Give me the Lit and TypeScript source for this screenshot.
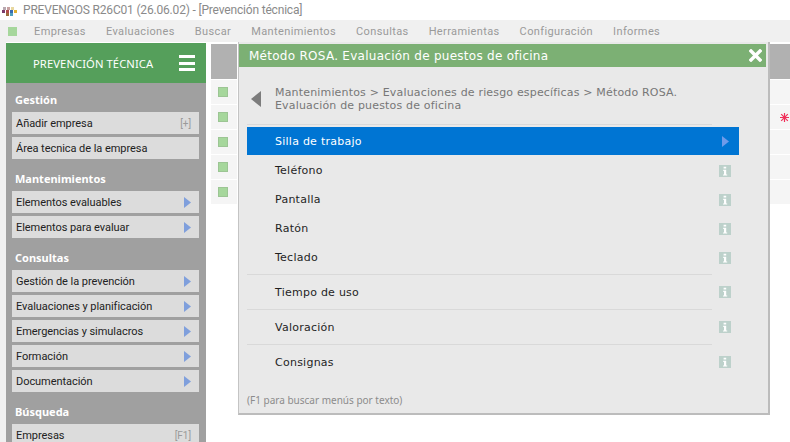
import { LitElement, html, css, svg } from "lit";
import { customElement } from "lit/decorators.js";

const logoCells: [number, number, string][] = [
  [1, 0, "#b8a8b0"], [5, 0, "#c8a0a0"], [9, 0, "#e8d8a0"],
  [0, 3, "#7a3a6a"], [4, 3, "#b04a4a"], [8, 3, "#3a6ab0"], [12, 3, "#e0b030"],
  [4, 6, "#9a6a3a"], [8, 6, "#50a0c0"],
];

const arrow = (fill = "#7f9fdc") => html`<svg class="arrow" width="7" height="11" viewBox="0 0 7 11"><path d="M0 0 L7 5.5 L0 11 Z" fill=${fill}></path></svg>`;
const info = html`<svg class="info" width="12" height="12" viewBox="0 0 12 12"><rect width="12" height="12" fill="#bdd1cb"></rect><path d="M4.6 1.8h2.6v1.8H4.6zM4.2 4.8h3v4.6h1v1.2H4v-1.2h1V6H4.2z" fill="#fff"></path></svg>`;

type Item = { t: string; hint?: string };
const sections: { title: string; items: Item[] }[] = [
  { title: "Gestión", items: [{ t: "Añadir empresa", hint: "[+]" }, { t: "Área tecnica de la empresa", hint: "" }] },
  { title: "Mantenimientos", items: [{ t: "Elementos evaluables" }, { t: "Elementos para evaluar" }] },
  { title: "Consultas", items: [{ t: "Gestión de la prevención" }, { t: "Evaluaciones y planificación" }, { t: "Emergencias y simulacros" }, { t: "Formación" }, { t: "Documentación" }] },
  { title: "Búsqueda", items: [{ t: "Empresas", hint: "[F1]" }] },
];

const menu = ["Empresas", "Evaluaciones", "Buscar", "Mantenimientos", "Consultas", "Herramientas", "Configuración", "Informes"];

@customElement("app-root")
export class AppRoot extends LitElement {
  static styles = css`
    :host { display: block; width: 790px; height: 442px; overflow: hidden; position: relative; background: #fff; font-family: "Noto Sans", sans-serif; }
    .title { height: 20px; display: flex; align-items: center; gap: 5px; padding-left: 2px; background: #fff; color: #8a8a8a; font-family: Roboto, sans-serif; font-size: 12px; letter-spacing: -0.18px; }
    .title svg { margin-top: 3px; }
    .menu { height: 22px; background: #f0f0f0; display: flex; align-items: center; padding-left: 8px; color: #9a9a9a; font-family: Roboto, sans-serif; font-size: 11px; letter-spacing: 0.38px; }
    .menu .sq { width: 9px; height: 9px; background: #a6d79c; margin-right: 17px; }
    .menu span { margin-right: 20px; }
    .body { display: flex; height: 400px; }
    .gutter { width: 6px; background: #f0f0f0; }
    .side { width: 200px; background: #a0a0a0; margin-top: 1px; height: 420px; flex: none; }
    .head { height: 40px; background: #559f5b; color: #fff; display: flex; align-items: center; font-size: 11.2px; letter-spacing: .1px; padding-left: 27px; gap: 26px; }
    .burger { width: 16px; height: 16px; display: flex; flex-direction: column; justify-content: space-between; }
    .burger i { display: block; height: 3px; background: #fff; }
    .sec { padding: 0 7px 0 6px; }
    .sec h3 { margin: 0; height: 29px; padding: 4px 0 0 3px; box-sizing: border-box; display: flex; align-items: center; color: #fff; font-size: 11px; font-weight: 700; }
    .item { height: 22px; margin-bottom: 3px; background: #dcdcdc; display: flex; align-items: center; justify-content: space-between; padding: 0 8px 0 4px; color: #222; font-family: Roboto, sans-serif; font-size: 11px; letter-spacing: -.05px; box-sizing: border-box; }
    .item .hint { color: #9a9a9a; font-size: 10px; }
    .grid { margin: 2px 0 0 5px; width: 579px; }
    .gh { height: 35px; background: #b1b1b1; margin-bottom: 1px; }
    .row { height: 24px; margin-bottom: 1px; background: #f5f5f5; display: flex; align-items: center; padding: 0 1px 0 8px; justify-content: space-between; }
    .row i { width: 8px; height: 8px; background: #a6d79c; outline: 1px solid #9cc594; }
    .modal { position: absolute; left: 238px; top: 42px; width: 532px; height: 373px; box-sizing: border-box; background: #e9e9e9; border-right: 2px solid #bcbcbc; border-bottom: 2px solid #bcbcbc; border-left: 1px solid #c4c4c4; box-shadow: -1px 0 0 #fff; font-family: "DejaVu Sans", sans-serif; display: flex; flex-direction: column; padding: 2px 2px 0 0; }
    .mt { height: 23px; flex: none; background: #7cb074; color: #fff; display: flex; align-items: center; justify-content: space-between; padding: 0 4px 0 10px; font-size: 12px; letter-spacing: .27px; }
    .crumb { display: flex; align-items: center; margin: 18px 0 0 0; padding-left: 12px; height: 28px; color: #777; font-size: 11px; letter-spacing: .17px; line-height: 13px; flex: none; }
    .crumb svg { margin-right: 15px; flex: none; }
    .crumb div { width: 430px; margin-left: -1px; }
    .list { margin: 11px 0 0 8px; width: 492px; padding-top: 3px; background: linear-gradient(#d9d9d9, #d9d9d9) no-repeat 0 0 / 465px 1px; }
    .li { display: flex; align-items: center; justify-content: space-between; height: 29px; color: #1f1f1f; font-size: 11px; letter-spacing: .25px; padding: 0 8px 0 28px; box-sizing: border-box; }
    .li.first { height: 28px; background: #0075d3; color: #fff; padding-right: 10px; margin-bottom: 1px; }
    .li.sep { height: 35px; padding-top: 1px; background: linear-gradient(#d9d9d9, #d9d9d9) no-repeat 0 0 / 465px 1px; }
    .li.gap { margin-top: 2px; }
    .foot { margin: 14px 0 0 8px; color: #8c8c8c; font-family: "Noto Sans", sans-serif; font-size: 10px; }
  `;

  render() {
    return html`
      <div class="title">
        <svg width="16" height="9" viewBox="0 0 16 9">${logoCells.map(([x, y, c]) => svg`<rect x=${x} y=${y} width="3" height="3" fill=${c}></rect>`)}</svg>
        <span>PREVENGOS R26C01 (26.06.02) - [Prevención técnica]</span>
      </div>
      <div class="menu"><div class="sq"></div>${menu.map((m) => html`<span>${m}</span>`)}</div>
      <div class="body">
        <div class="gutter"></div>
        <div class="side">
          <div class="head"><span>PREVENCIÓN TÉCNICA</span><div class="burger"><i></i><i></i><i></i></div></div>
          ${sections.map((s) => html`<div class="sec"><h3>${s.title}</h3>
            ${s.items.map((i) => html`<div class="item"><span>${i.t}</span>${i.hint === undefined ? arrow() : html`<span class="hint">${i.hint}</span>`}</div>`)}
          </div>`)}
        </div>
        <div class="grid">
          <div class="gh"></div>
          ${[0, 1, 2, 3, 4].map((n) => html`<div class="row"><i></i>${n === 1 ? html`<svg width="9" height="9" viewBox="0 0 9 9"><path d="M4.5 0V9M0 4.5H9M1.2 1.2L7.8 7.8M7.8 1.2L1.2 7.8" stroke="#f0305a" stroke-width="1.2" fill="none"></path></svg>` : ""}</div>`)}
        </div>
      </div>
      <div class="modal">
        <div class="mt"><span>Método ROSA. Evaluación de puestos de oficina</span>
          <svg width="13" height="13" viewBox="0 0 13 13"><path d="M2 2 L11 11 M11 2 L2 11" stroke="#fff" stroke-width="3.4" stroke-linecap="square" fill="none"></path></svg>
        </div>
        <div class="crumb">
          <svg width="10" height="16" viewBox="0 0 10 16"><path d="M10 0 V16 L0 8 Z" fill="#7c7c7c"></path></svg>
          <div>Mantenimientos &gt; Evaluaciones de riesgo específicas &gt; Método ROSA. Evaluación de puestos de oficina</div>
        </div>
        <div class="list">
          <div class="li first"><span>Silla de trabajo</span>${arrow("#6f9bea")}</div>
          <div class="li"><span>Teléfono</span>${info}</div>
          <div class="li"><span>Pantalla</span>${info}</div>
          <div class="li"><span>Ratón</span>${info}</div>
          <div class="li"><span>Teclado</span>${info}</div>
          <div class="li sep gap"><span>Tiempo de uso</span>${info}</div>
          <div class="li sep"><span>Valoración</span>${info}</div>
          <div class="li sep"><span>Consignas</span>${info}</div>
        </div>
        <div class="foot">(F1 para buscar menús por texto)</div>
      </div>
    `;
  }
}
